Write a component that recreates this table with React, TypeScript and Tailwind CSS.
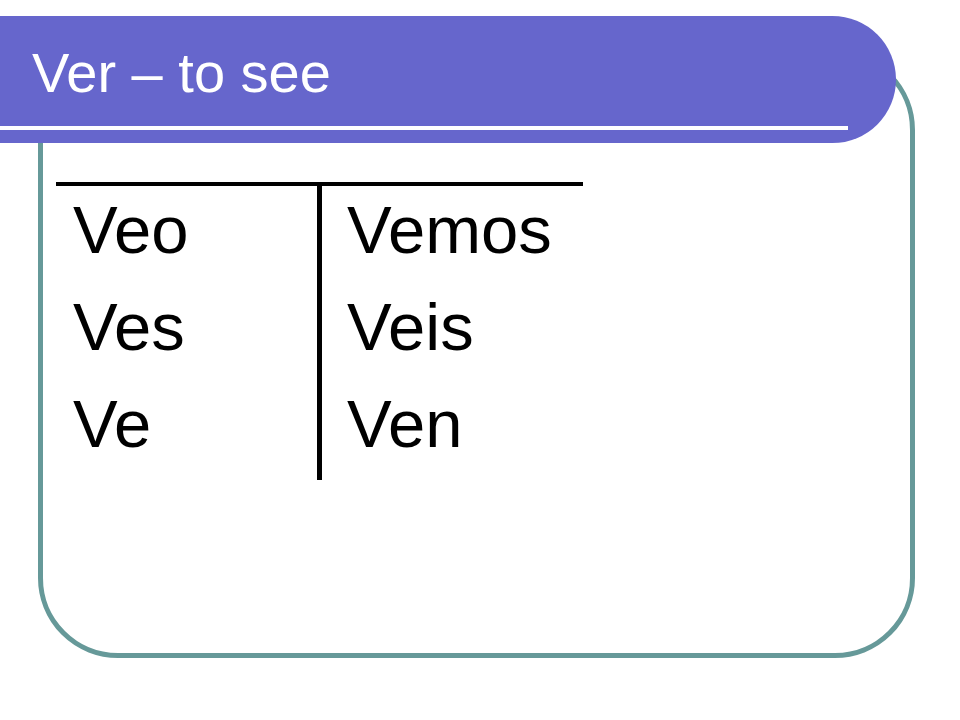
import React from 'react';

const left = ['Veo', 'Ves', 'Ve'];
const right = ['Vemos', 'Veis', 'Ven'];

export default function App() {
  return (
    <div className="w-[960px] h-[720px] bg-white overflow-hidden pt-[16px] font-['Liberation_Sans',Arial,sans-serif]">
      {/* Title bar */}
      <div className="relative z-10 w-[896px] h-[127px] bg-[#6666cc] rounded-r-[64px] pt-[29px]">
        <h1 className="pl-[32px] text-[56px] leading-none text-white">Ver – to see</h1>
        <div className="mt-[25px] h-[4px] w-[848px] bg-white" />
      </div>

      {/* Content frame */}
      <div className="-mt-[93px] ml-[38px] w-[877px] h-[608px] border-[5px] border-[#669999] rounded-[80px] pt-[127px] pl-[13px]">
        <div className="w-[527px] border-t-4 border-black flex text-[67px] leading-[97px] text-black">
          <div className="w-[261px] pl-[17px]">
            <div className="-mt-[5px]">
              {left.map((w) => (
                <div key={w}>{w}</div>
              ))}
            </div>
          </div>
          <div className="h-[294px] border-l-[5px] border-black pl-[25px]">
            <div className="-mt-[5px]">
              {right.map((w) => (
                <div key={w}>{w}</div>
              ))}
            </div>
          </div>
        </div>
      </div>
    </div>
  );
}
